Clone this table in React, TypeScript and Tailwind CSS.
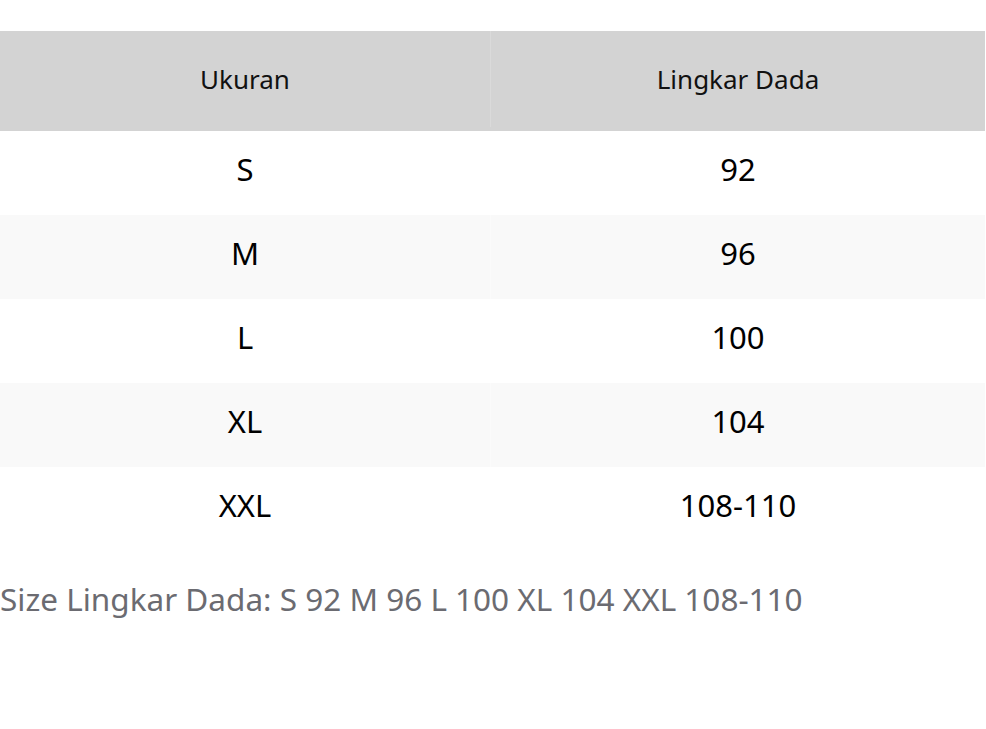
import React from 'react';

const sizes = [
  { size: 'S', chest: '92' },
  { size: 'M', chest: '96' },
  { size: 'L', chest: '100' },
  { size: 'XL', chest: '104' },
  { size: 'XXL', chest: '108-110' },
];

const App = () => {
  return (
    <div className="min-h-screen w-[986px] bg-white pt-[31px] font-['Noto_Sans',sans-serif]">
      {/* Size table */}
      <div className="w-[985px]">
        <div className="grid h-[100px] grid-cols-[491px_494px] bg-[#d3d3d3] pb-[4px] text-[26px] text-[#111]">
          <div className="flex items-center justify-center border-r border-[#dadada]">Ukuran</div>
          <div className="flex items-center justify-center">Lingkar Dada</div>
        </div>
        {sizes.map((row, i) => (
          <div
            key={row.size}
            className={`grid h-[84px] grid-cols-[491px_494px] text-[31px] text-black ${
              i % 2 === 1 ? 'bg-[#f9f9f9]' : 'bg-white'
            }`}
          >
            <div className="flex items-center justify-center border-r border-white/40 pb-[8px]">{row.size}</div>
            <div className="flex items-center justify-center pb-[8px]">{row.chest}</div>
          </div>
        ))}
      </div>

      <p className="mt-[28px] text-[31.5px] leading-[40px] text-[#6b6b71]">
        Size Lingkar Dada: S 92 M 96 L 100 XL 104 XXL 108-110
      </p>
    </div>
  );
};

export default App;
